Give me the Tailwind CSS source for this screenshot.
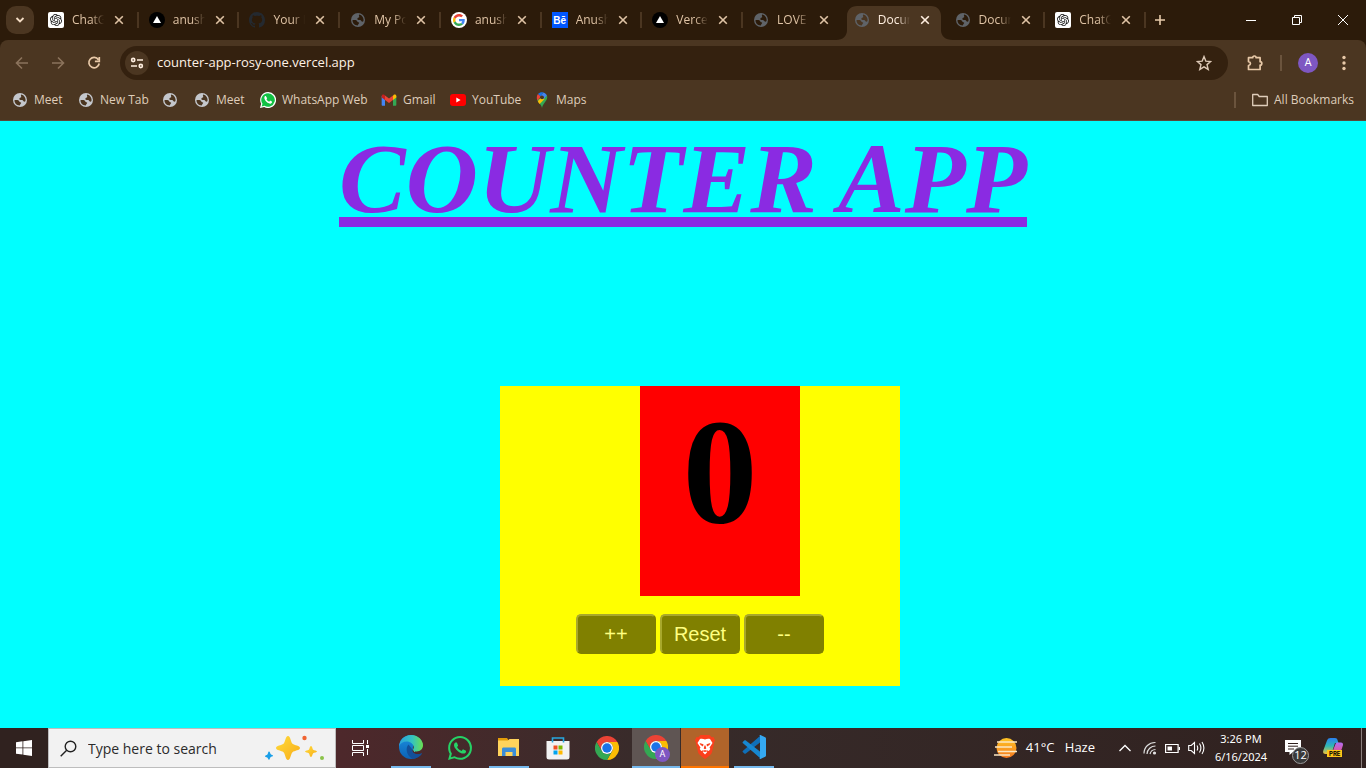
<!DOCTYPE html>
<html lang="en">
<head>
<meta charset="utf-8">
<meta name="viewport" content="width=device-width, initial-scale=1">
<title>Counter App</title>
<script src="https://cdn.jsdelivr.net/npm/@tailwindcss/browser@4"></script>
</head>
<body class="flex h-screen flex-col overflow-hidden bg-[#00ffff] font-['Segoe_UI','Open_Sans','Noto_Sans',sans-serif]">

<svg class="hidden" aria-hidden="true">
  <symbol id="x" viewBox="0 0 10 10"><path d="M1.2 1.2l7.6 7.6M8.8 1.2L1.2 8.8" stroke="currentColor" stroke-width="1.6" fill="none"/></symbol>
  <symbol id="globe" viewBox="0 0 16 16"><path fill="currentColor" fill-rule="evenodd" d="M8 1a7 7 0 1 0 0 14A7 7 0 0 0 8 1zM2.4 8.2c1.400-.3 3.200-.3 4.200.3.900.6.500 1.500 1.700 1.700 1.100.2 1.100.8.400 1.500-.700.6-.500 1.300-1.200 1.800A5.600 5.600 0 0 1 2.400 8.200zM9.300 2.600a5.600 5.600 0 0 1 4.200 6.500c-.8 1-1.700.6-2.200-.2-.5-.900-1.700-.700-2.700-.800-1.300-.1-1.600-1.300-.9-2.100.5-.6 1.300-.4 1.500-1.100.2-.8-.8-1.200 0-2.300z"/></symbol>
  <symbol id="gpt" viewBox="0 0 32 32"><rect width="32" height="32" rx="4" fill="#fff"/><g transform="translate(4 4)"><path fill="#111" d="M22.2819 9.8211a5.9847 5.9847 0 0 0-.5157-4.9108 6.0462 6.0462 0 0 0-6.5098-2.9A6.0651 6.0651 0 0 0 4.9807 4.1818a5.9847 5.9847 0 0 0-3.9977 2.9 6.0462 6.0462 0 0 0 .7427 7.0966 5.98 5.98 0 0 0 .511 4.9107 6.051 6.051 0 0 0 6.5146 2.9001A5.9847 5.9847 0 0 0 13.2599 24a6.0557 6.0557 0 0 0 5.7718-4.2058 5.9894 5.9894 0 0 0 3.9977-2.9001 6.0557 6.0557 0 0 0-.7475-7.0729zm-9.022 12.6081a4.4755 4.4755 0 0 1-2.8764-1.0408l.1419-.0804 4.7783-2.7582a.7948.7948 0 0 0 .3927-.6813v-6.7369l2.02 1.1686a.071.071 0 0 1 .038.052v5.5826a4.504 4.504 0 0 1-4.4945 4.4944zm-9.6607-4.1254a4.4708 4.4708 0 0 1-.5346-3.0137l.142.0852 4.783 2.7582a.7712.7712 0 0 0 .7806 0l5.8428-3.3685v2.3324a.0804.0804 0 0 1-.0332.0615L9.74 19.9502a4.4992 4.4992 0 0 1-6.1408-1.6464zM2.3408 7.8956a4.485 4.485 0 0 1 2.3655-1.9728V11.6a.7664.7664 0 0 0 .3879.6765l5.8144 3.3543-2.0201 1.1685a.0757.0757 0 0 1-.071 0l-4.8303-2.7865A4.504 4.504 0 0 1 2.3408 7.872zm16.5963 3.8558L13.1038 8.364 15.1192 7.2a.0757.0757 0 0 1 .071 0l4.8303 2.7913a4.4944 4.4944 0 0 1-.6765 8.1042v-5.6772a.79.79 0 0 0-.407-.667zm2.0107-3.0231l-.142-.0852-4.7735-2.7818a.7759.7759 0 0 0-.7854 0L9.409 9.2297V6.8974a.0662.0662 0 0 1 .0284-.0615l4.8303-2.7866a4.4992 4.4992 0 0 1 6.6802 4.66zM8.3065 12.863l-2.02-1.1638a.0804.0804 0 0 1-.038-.0567V6.0742a4.4992 4.4992 0 0 1 7.3757-3.4537l-.142.0805L8.704 5.459a.7948.7948 0 0 0-.3927.6813zm1.0976-2.3654l2.602-1.4998 2.6069 1.4998v2.9994l-2.5974 1.4997-2.6067-1.4997Z"/></g></symbol>
  <symbol id="vercel" viewBox="0 0 16 16"><circle cx="8" cy="8" r="8" fill="#000"/><path d="M8 4l4 7H4z" fill="#fff"/></symbol>
  <symbol id="github" viewBox="0 0 16 16"><path fill="#24292f" d="M8 0C3.58 0 0 3.58 0 8c0 3.54 2.29 6.53 5.47 7.59.4.07.55-.17.55-.38 0-.19-.01-.82-.01-1.49-2.01.37-2.53-.49-2.69-.94-.09-.23-.48-.94-.82-1.13-.28-.15-.68-.52-.01-.53.63-.01 1.08.58 1.23.82.72 1.21 1.87.87 2.33.66.07-.52.28-.87.51-1.07-1.78-.2-3.64-.89-3.64-3.95 0-.87.31-1.59.82-2.15-.08-.2-.36-1.02.08-2.12 0 0 .67-.21 2.2.82.64-.18 1.32-.27 2-.27s1.36.09 2 .27c1.53-1.04 2.2-.82 2.2-.82.44 1.1.16 1.92.08 2.12.51.56.82 1.27.82 2.15 0 3.07-1.87 3.75-3.65 3.95.29.25.54.73.54 1.48 0 1.07-.01 1.93-.01 2.2 0 .21.15.46.55.38A8.01 8.01 0 0 0 16 8c0-4.42-3.58-8-8-8z"/></symbol>
  <symbol id="google" viewBox="0 0 64 64"><circle cx="32" cy="32" r="32" fill="#fff"/><g transform="translate(8 8)"><path fill="#EA4335" d="M24 9.5c3.540 0 6.710 1.220 9.210 3.600l6.850-6.850C35.900 2.380 30.470 0 24 0 14.620 0 6.510 5.380 2.560 13.220l7.980 6.190C12.430 13.720 17.740 9.500 24 9.500z"/><path fill="#4285F4" d="M46.980 24.550c0-1.570-.150-3.090-.380-4.550H24v9.020h12.940c-.580 2.960-2.260 5.480-4.780 7.180l7.730 6c4.510-4.180 7.090-10.360 7.090-17.650z"/><path fill="#FBBC05" d="M10.530 28.590c-.480-1.450-.760-2.990-.760-4.590s.270-3.140.760-4.590l-7.980-6.190C.920 16.460 0 20.120 0 24c0 3.880.920 7.540 2.560 10.780l7.970-6.190z"/><path fill="#34A853" d="M24 48c6.480 0 11.930-2.130 15.890-5.810l-7.730-6c-2.150 1.450-4.920 2.300-8.160 2.300-6.260 0-11.570-4.220-13.470-9.910l-7.980 6.190C6.510 42.620 14.620 48 24 48z"/></g></symbol>
  <symbol id="wa" viewBox="0 0 24 24"><path fill="currentColor" d="M17.472 14.382c-.297-.149-1.758-.867-2.030-.967-.273-.099-.471-.148-.670.150-.197.297-.767.966-.940 1.164-.173.199-.347.223-.644.075-.297-.150-1.255-.463-2.390-1.475-.883-.788-1.480-1.761-1.653-2.059-.173-.297-.018-.458.130-.606.134-.133.298-.347.446-.520.149-.174.198-.298.298-.497.099-.198.050-.371-.025-.520-.075-.149-.669-1.612-.916-2.207-.242-.579-.487-.500-.669-.510-.173-.008-.371-.010-.570-.010-.198 0-.520.074-.792.372-.272.297-1.040 1.016-1.040 2.479 0 1.462 1.065 2.875 1.213 3.074.149.198 2.096 3.200 5.077 4.487.709.306 1.262.489 1.694.625.712.227 1.360.195 1.871.118.571-.085 1.758-.719 2.006-1.413.248-.694.248-1.289.173-1.413-.074-.124-.272-.198-.570-.347m-5.421 7.403h-.004a9.870 9.870 0 01-5.031-1.378l-.361-.214-3.741.982.998-3.648-.235-.374a9.860 9.860 0 01-1.510-5.260c.001-5.450 4.436-9.884 9.888-9.884 2.640 0 5.122 1.030 6.988 2.898a9.825 9.825 0 012.893 6.994c-.003 5.450-4.437 9.884-9.885 9.884m8.413-18.297A11.815 11.815 0 0012.050 0C5.495 0 .160 5.335.157 11.892c0 2.096.547 4.142 1.588 5.945L.057 24l6.305-1.654a11.882 11.882 0 005.683 1.448h.005c6.554 0 11.890-5.335 11.893-11.893a11.821 11.821 0 00-3.480-8.413Z"/></symbol>
  <symbol id="chrome" viewBox="0 0 48 48"><path fill="#EA4335" d="M3.200 12A24 24 0 0 1 44.800 12H24a12 12 0 0 0-10.400 18z"/><path fill="#FBBC04" d="M44.800 12A24 24 0 0 1 24 48l10.400-18A12 12 0 0 0 24 12z"/><path fill="#34A853" d="M24 48A24 24 0 0 1 3.200 12l10.400 18A12 12 0 0 0 34.400 30z"/><circle cx="24" cy="24" r="12" fill="#fff"/><circle cx="24" cy="24" r="9.500" fill="#1A73E8"/></symbol>
</svg>

<header class="shrink-0 border-b border-[#5b4a3a] bg-[#4b3621]">
  <!-- Tab strip -->
  <div class="flex h-10 items-center bg-[#2c1b0a] pl-1.5">
    <button aria-label="Search tabs" class="flex h-7 w-7 items-center justify-center rounded-[10px] bg-[#4b3621] text-[#f3dcc4]"><svg class="h-2.5 w-2.5" viewBox="0 0 10 10"><path d="M1.500 3L5 6.500 8.500 3" fill="none" stroke="currentColor" stroke-width="1.800"/></svg></button>
    <nav aria-label="Tabs" class="ml-1 grid h-10 w-[82%] max-w-[1108px] grid-cols-11 text-[12px] text-[#dfc3a5] [&>div]:relative [&>div]:flex [&>div]:min-w-0 [&>div]:items-center [&>div]:pl-2.5 [&_a]:flex [&_a]:items-center [&_a]:gap-2 [&_a>svg]:h-4 [&_a>svg]:w-4 [&_a>svg]:shrink-0 [&_a>svg]:text-[#5f6368] [&_span]:w-8 [&_span]:overflow-hidden [&_span]:whitespace-nowrap [&_span]:[mask-image:linear-gradient(to_right,black_60%,transparent)] [&_button]:ml-2.5 [&_button>svg]:h-2.5 [&_button>svg]:w-2.5">
      <div class="border-r-2 border-[#4b3621] [border-image:linear-gradient(transparent_30%,#4b3621_30%,#4b3621_70%,transparent_70%)_1]"><a href="#"><svg><use href="#gpt"/></svg><span>ChatGPT</span></a><button aria-label="Close tab"><svg><use href="#x"/></svg></button></div>
      <div class="border-r-2 border-[#4b3621] [border-image:linear-gradient(transparent_30%,#4b3621_30%,#4b3621_70%,transparent_70%)_1]"><a href="#"><svg><use href="#vercel"/></svg><span>anushka</span></a><button aria-label="Close tab"><svg><use href="#x"/></svg></button></div>
      <div class="border-r-2 border-[#4b3621] [border-image:linear-gradient(transparent_30%,#4b3621_30%,#4b3621_70%,transparent_70%)_1]"><a href="#"><svg><use href="#github"/></svg><span>Your Re</span></a><button aria-label="Close tab"><svg><use href="#x"/></svg></button></div>
      <div class="border-r-2 border-[#4b3621] [border-image:linear-gradient(transparent_30%,#4b3621_30%,#4b3621_70%,transparent_70%)_1]"><a href="#"><svg><use href="#globe"/></svg><span>My Port</span></a><button aria-label="Close tab"><svg><use href="#x"/></svg></button></div>
      <div class="border-r-2 border-[#4b3621] [border-image:linear-gradient(transparent_30%,#4b3621_30%,#4b3621_70%,transparent_70%)_1]"><a href="#"><svg><use href="#google"/></svg><span>anushka</span></a><button aria-label="Close tab"><svg><use href="#x"/></svg></button></div>
      <div class="border-r-2 border-[#4b3621] [border-image:linear-gradient(transparent_30%,#4b3621_30%,#4b3621_70%,transparent_70%)_1]"><a href="#"><b class="flex h-4 w-4 shrink-0 items-center justify-center bg-[#0057ff] font-['Liberation_Sans'] text-[10px] text-white">Bē</b><span>Anushka</span></a><button aria-label="Close tab"><svg><use href="#x"/></svg></button></div>
      <div class="border-r-2 border-[#4b3621] [border-image:linear-gradient(transparent_30%,#4b3621_30%,#4b3621_70%,transparent_70%)_1]"><a href="#"><svg><use href="#vercel"/></svg><span>Vercel</span></a><button aria-label="Close tab"><svg><use href="#x"/></svg></button></div>
      <div><a href="#"><svg><use href="#globe"/></svg><span>LOVE C</span></a><button aria-label="Close tab"><svg><use href="#x"/></svg></button></div>
      <div class="text-[#ffefe0]">
        <svg class="absolute -left-2 bottom-0 h-[34px] w-[117px]" viewBox="0 0 117 34" aria-hidden="true"><path fill="#4b3621" d="M0 34c7 0 11-4 11-10V10C11 4 15 0 21 0h74c6 0 10 4 10 10v14c0 6 4 10 12 10z"/></svg>
        <a href="#" aria-current="page" class="relative"><svg><use href="#globe"/></svg><span>Docum</span></a><button aria-label="Close tab" class="relative"><svg><use href="#x"/></svg></button></div>
      <div class="border-r-2 border-[#4b3621] [border-image:linear-gradient(transparent_30%,#4b3621_30%,#4b3621_70%,transparent_70%)_1]"><a href="#"><svg><use href="#globe"/></svg><span>Docum</span></a><button aria-label="Close tab"><svg><use href="#x"/></svg></button></div>
      <div class="border-r-2 border-[#4b3621] [border-image:linear-gradient(transparent_30%,#4b3621_30%,#4b3621_70%,transparent_70%)_1]"><a href="#"><svg><use href="#gpt"/></svg><span>ChatGPT</span></a><button aria-label="Close tab"><svg><use href="#x"/></svg></button></div>
    </nav>
    <button aria-label="New tab" class="ml-2 text-[#e8cbaa]"><svg class="h-3 w-3" viewBox="0 0 12 12"><path d="M6 1v10M1 6h10" stroke="currentColor" stroke-width="1.600"/></svg></button>
    <div class="ml-auto flex text-white [&>button]:flex [&>button]:h-10 [&>button]:w-[46px] [&>button]:items-center [&>button]:justify-center [&_svg]:h-3 [&_svg]:w-3">
      <button aria-label="Minimize"><svg viewBox="0 0 12 12"><path d="M1 6.500h10" stroke="currentColor"/></svg></button>
      <button aria-label="Restore"><svg viewBox="0 0 12 12" fill="none" stroke="currentColor"><path d="M1.500 3.500h7v7h-7zM3.500 3.500v-2h7v7h-2"/></svg></button>
      <button aria-label="Close"><svg viewBox="0 0 12 12"><path d="M1 1l10 10M11 1L1 11" stroke="currentColor"/></svg></button>
    </div>
  </div>
  <!-- Address row, rounded at the top against the darker strip -->
  <div class="bg-[#2c1b0a]">
  <div class="flex h-[46px] items-center rounded-t-[8px] bg-[#4b3621] pr-3.5 pl-3.5 text-[#e8c9a8]">
    <button aria-label="Back" class="text-[#8b735c]"><svg class="h-4 w-4" viewBox="0 0 16 16"><path d="M14 8H2.500M8 2.500L2.500 8 8 13.500" fill="none" stroke="currentColor" stroke-width="1.600"/></svg></button>
    <button aria-label="Forward" class="ml-5 text-[#8b735c]"><svg class="h-4 w-4" viewBox="0 0 16 16"><path d="M2 8h11.500M8 2.500L13.500 8 8 13.500" fill="none" stroke="currentColor" stroke-width="1.600"/></svg></button>
    <button aria-label="Reload" class="ml-5"><svg class="h-4 w-4" viewBox="0 0 16 16"><path d="M12.400 4.700A5.200 5.200 0 1 0 13.200 8.500M13.300 2v4.400H8.900" fill="none" stroke="currentColor" stroke-width="1.700"/></svg></button>
    <form class="ml-[18px] flex h-[34px] flex-1 items-center rounded-full bg-[#34210f] pr-4 pl-[5px]">
      <button type="button" aria-label="View site information" class="flex h-6 w-6 items-center justify-center rounded-full bg-[#4b3621] text-[#ffefe0]"><svg class="h-3.5 w-3.5" viewBox="0 0 14 14" fill="none" stroke="currentColor" stroke-width="1.600"><circle cx="3.200" cy="4" r="1.600"/><path d="M7 4h6M1 10h6"/><circle cx="10.800" cy="10" r="1.600"/></svg></button>
      <input aria-label="Address" type="text" value="counter-app-rosy-one.vercel.app" class="ml-2 min-w-0 flex-1 bg-transparent text-[13px] text-[#fff2e6] outline-none">
      <button type="button" aria-label="Bookmark this tab" class="text-[#dcc8b6]"><svg class="h-4 w-4" viewBox="0 0 16 16"><path d="M8 1.600l1.800 4.500 4.900.4-3.700 3.100 1.200 4.800L8 11.800l-4.200 2.600L5 9.600 1.300 6.500l4.900-.4z" fill="none" stroke="currentColor" stroke-width="1.400"/></svg></button>
    </form>
    <button aria-label="Extensions" class="ml-[18px]"><svg class="h-[18px] w-[18px]" viewBox="0 0 18 18"><path d="M2.500 3.700h4.200a1.700 1.700 0 0 1 3.400 0h4v4a1.700 1.700 0 0 1 0 3.400v4.400H2.500v-4c2.600-.4 2.600-3.400 0-3.800z" fill="none" stroke="currentColor" stroke-width="1.700" stroke-linejoin="round"/></svg></button>
    <i class="ml-4 h-4 w-0.5 bg-[#6b543d]"></i>
    <button aria-label="Profile" class="ml-4 flex h-5 w-5 items-center justify-center rounded-full bg-[#7e57c2] font-['Roboto'] text-[11px] text-white">A</button>
    <button aria-label="Menu" class="ml-[18px]"><svg class="h-4 w-4" viewBox="0 0 16 16" fill="currentColor"><circle cx="8" cy="2.500" r="1.700"/><circle cx="8" cy="8" r="1.700"/><circle cx="8" cy="13.500" r="1.700"/></svg></button>
  </div>
  </div>
  <!-- Bookmarks -->
  <div class="flex h-[34px] items-center pb-1.5 pl-3 text-[12px] whitespace-nowrap text-[#dfcdba] [&>a]:flex [&>a]:items-center [&>a]:gap-1.5 [&>a>svg]:h-4 [&>a>svg]:w-4 [&>a>svg]:shrink-0">
    <a href="#" class="w-[66px]"><svg class="text-[#c4c7cc]"><use href="#globe"/></svg>Meet</a>
    <a href="#" class="w-[84px]"><svg class="text-[#c4c7cc]"><use href="#globe"/></svg>New Tab</a>
    <a href="#" class="w-8" aria-label="Untitled bookmark"><svg class="text-[#c4c7cc]"><use href="#globe"/></svg></a>
    <a href="#" class="w-[66px]"><svg class="text-[#c4c7cc]"><use href="#globe"/></svg>Meet</a>
    <a href="#" class="w-[121px]"><svg viewBox="0 0 24 24"><path fill="#fff" d="M12 0a12 12 0 1 1-5.700 22.500L0 24l1.700-6.200A12 12 0 0 1 12 0z"/><path fill="#12c143" d="M12 1.800a10.200 10.200 0 1 1-5.300 18.900l-4.200 1.100 1.200-4.100A10.200 10.200 0 0 1 12 1.800z"/><path fill="#fff" d="M8.900 6.500c-.3-.6-1.200-.6-1.700 0-2.600 3 2.700 11 8.200 11 1.500 0 3-1.500 2.600-2.900-.1-.4-2.600-1.600-3-1.300l-1.200 1.300c-2-.7-3.300-2-4.100-3.800l1-1.400z"/></svg>WhatsApp Web</a>
    <a href="#" class="w-[69px]"><svg viewBox="0 0 24 24"><path fill="#4285F4" d="M1 5.500V19c0 1 .7 1.500 1.500 1.500H6V11z"/><path fill="#34A853" d="M18 11v9.500h3.500c.9 0 1.500-.7 1.500-1.500V5.500z"/><path fill="#FBBC04" d="M18 5.500V12l5-3.700V6c0-2.200-2.300-3.100-3.900-1.900z"/><path fill="#EA4335" d="M6 12V5.100l6 4.500 6-4.500V12l-6 4.500z"/><path fill="#C5221F" d="M1 6v2.300L6 12V5.100L4.900 4.200C3.300 3 1 3.900 1 6z"/></svg>Gmail</a>
    <a href="#" class="w-[84px]"><svg viewBox="0 0 16 16"><rect y="2" width="16" height="12" rx="3" fill="#f00"/><path d="M6.300 5.500v5l4.300-2.500z" fill="#fff"/></svg>YouTube</a>
    <a href="#"><svg viewBox="0 0 16 16"><path fill="#34A853" d="M8 16c-.5-3.500-4.300-5.500-5-8.500L13 3.500c1.500 5-4 7-5 12.500z"/><path fill="#FBBC04" d="M3.800 9.200L9.400 2.800l1 4.400L5.600 12c-.7-.9-1.400-1.800-1.800-2.800z"/><path fill="#EA4335" d="M4 2l3 2.500L3.500 8.600C2.300 6.200 2.700 3.500 4 2z"/><path fill="#1A73E8" d="M4 2C5.500.2 7.700-.2 9.500.4L6.600 4.200z"/><path fill="#4285F4" d="M9.500.4c1.600.5 2.800 1.600 3.400 3L9.400 7.200 6.600 4.200z"/><circle cx="8" cy="5.300" r="1.900" fill="#4b3621"/></svg>Maps</a>
    <i class="ml-auto h-4 w-0.5 bg-[#6b543d]"></i>
    <a href="#" class="mr-3 ml-4"><svg viewBox="0 0 16 16"><path d="M.700 12.500v-10h5l1.500 2h8.100v9H.700z" fill="none" stroke="currentColor" stroke-width="1.300" stroke-linejoin="round"/></svg><span>All Bookmarks</span></a>
  </div>
</header>

<main class="flex min-h-0 flex-1 flex-col items-center overflow-hidden">
  <h1 class="text-center font-['Liberation_Serif',serif] text-[100px] leading-[115px] font-bold text-[#8a2be2] italic underline">COUNTER APP</h1>
  <section aria-label="Counter" class="mt-[150px] ml-[34px] flex h-[300px] w-[400px] shrink-0 flex-col items-center bg-[#ffff00]">
    <output class="ml-10 block h-[210px] w-40 bg-[#ff0000] text-center font-['Liberation_Serif',serif] text-[150px] leading-[172px] font-bold">0</output>
    <div class="mt-[18px] flex gap-1 font-['Liberation_Sans',sans-serif] text-[20px] text-[#ffff80] [&>button]:h-10 [&>button]:w-20 [&>button]:rounded-[5px] [&>button]:border-2 [&>button]:border-t-[#a8a82c] [&>button]:border-l-[#a8a82c] [&>button]:border-r-[#808000] [&>button]:border-b-[#808000] [&>button]:bg-[#808000]">
      <button>++</button><button>Reset</button><button>--</button>
    </div>
  </section>
</main>

<footer class="flex h-10 shrink-0 items-center bg-linear-to-r from-[#4d282b] from-25% via-[#372b2a] via-48% to-[#30211f] text-white">
  <button aria-label="Start" class="flex h-10 w-12 shrink-0 items-center justify-center bg-[#30221f]"><svg class="h-4 w-4" viewBox="0 0 16 16" fill="#fff"><path d="M0 2.200L6.500 1.300v6.200H0zM7.300 1.200L16 0v7.500H7.300zM0 8.300h6.500v6.200L0 13.700zM7.300 8.300H16V16l-8.700-1.200z"/></svg></button>
  <label class="flex h-10 w-72 shrink-0 items-center border border-[#bdbdbd] bg-[#f2f2f2] text-[#222]">
    <svg class="ml-[11px] h-[17px] w-[17px]" viewBox="0 0 17 17" fill="none" stroke="#222" stroke-width="1.400"><circle cx="10.500" cy="6.500" r="5.300"/><path d="M6.700 10.300L.7 16.300"/></svg>
    <input type="text" aria-label="Search" placeholder="Type here to search" class="ml-[11px] w-[172px] bg-transparent text-[14px] outline-none placeholder:text-[#2b2b2b]">
    <svg class="h-7 w-[64px]" viewBox="0 0 64 28"><defs><linearGradient id="gold" x2="1" y2="1"><stop stop-color="#ffdc3c"/><stop offset="1" stop-color="#f8ac18"/></linearGradient></defs><path fill="url(#gold)" d="M28 2c2.600 0 2.600 6 4.500 7.800S40 11.500 40 14s-5.600 2.400-7.500 4.200S30.600 26 28 26s-2.600-6-4.500-7.800S16 16.500 16 14s5.600-2.400 7.500-4.200S25.400 2 28 2z"/><path fill="url(#gold)" d="M51 12c1.300 0 1.300 3 2.200 3.800s3.800.7 3.800 1.700-2.900 1-3.800 1.800S52.300 23 51 23s-1.300-2.900-2.200-3.700S45 18.500 45 17.500s2.900-.9 3.800-1.700S49.700 12 51 12z"/><path fill="#1a9fe8" d="M9 17.500c1 0 1 2 1.800 2.800s2.200.6 2.200 1.500-1.800.8-2.500 1.500-.6 2.500-1.500 2.500-1-1.700-1.800-2.300S5 23 5 22.200s1.700-1 2.400-1.700.6-3 1.600-3z"/><circle cx="44.500" cy="4" r="2.200" fill="#f06432"/><circle cx="62" cy="24" r="2" fill="#8bc34a"/></svg>
  </label>
  <nav aria-label="Taskbar" class="flex shrink-0 [&>button]:relative [&>button]:mr-px [&>button]:flex [&>button]:h-10 [&>button]:w-12 [&>button]:items-center [&>button]:justify-center [&>button>svg]:h-6 [&>button>svg]:w-6">
    <button aria-label="Task view"><svg viewBox="0 0 24 24" fill="none" stroke="#fff" stroke-width="1"><path d="M4.500 4v3.500h11V4M4.500 20v-3.500h11V20M4.500 9.500h11v5h-11zM19.500 4v4M19.500 13v6"/><path fill="#fff" stroke="none" d="M18 9h3v3h-3z"/></svg></button>
    <button aria-label="Edge" class="ml-0.5 border-b-2 border-[#76b9ed] [clip-path:inset(0_4px)]"><svg viewBox="0 0 24 24"><defs><linearGradient id="e1" x2="1"><stop stop-color="#2a9fdd"/><stop offset=".55" stop-color="#34c3c0"/><stop offset="1" stop-color="#6be04f"/></linearGradient><linearGradient id="e2" x2="0" y2="1"><stop stop-color="#1b8fe0"/><stop offset="1" stop-color="#0c62b4"/></linearGradient></defs><circle cx="12" cy="12" r="12" fill="url(#e2)"/><path fill="#4b292b" d="M14.200 13.900c-.9-1.200.3-1.300 0-3.500L24.500 10v8.500H23c-1 .7-3 1.300-5 1-4.500-.4-6-4-3.800-5.600z"/><path fill="#12509a" d="M9.500 9.500C6 13 7.500 21 13.800 23.900c3.900-.4 7.200-2.400 9.200-5.200.2-.4-.1-.7-.6-.4-4.500 2.200-9.900.2-9.400-4.300z"/><path fill="url(#e1)" d="M0 11.500C.4 5 5.300 0 12 0c8 0 12 6 12 10.300 0 3.900-3 6.200-6.300 6.200-2.600 0-4.300-1.100-3.500-2.300 1.300-1.700.6-4.200-1.600-5.900C9 5.300 2 6.300 0 11.500z"/></svg></button>
    <button aria-label="WhatsApp" class="text-[#25d366]"><svg><use href="#wa"/></svg></button>
    <button aria-label="File Explorer" class="border-b-2 border-[#76b9ed] [clip-path:inset(0_4px)]"><svg viewBox="0 0 24 24"><path fill="#e39c09" d="M1 3h9l1.500 2H22v6H1z"/><path fill="#ffd35c" d="M1 5.500h10L12.500 4H22v17H1z"/><path fill="#3b8dd8" d="M5 14c0-1 .7-1.500 1.500-1.500h11c1 0 1.500.7 1.500 1.500v7h-3.500v-4h-7v4H5z"/></svg></button>
    <button aria-label="Microsoft Store"><svg viewBox="0 0 24 24"><path fill="#f2f2f2" d="M.5 5h23v16a2.500 2.500 0 0 1-2.500 2.500H3A2.500 2.500 0 0 1 .500 21z"/><path fill="none" stroke="#27a8e0" stroke-width="1.600" d="M6.500 6.500V2h11v4.500"/><path fill="#f25022" d="M7.500 9.500h4v4h-4z"/><path fill="#7fba00" d="M12.500 9.500h4v4h-4z"/><path fill="#00a4ef" d="M7.500 14.500h4v4h-4z"/><path fill="#ffb900" d="M12.500 14.500h4v4h-4z"/></svg></button>
    <button aria-label="Chrome"><svg><use href="#chrome"/></svg></button>
    <button aria-label="Chrome, profile A" class="border-b-2 border-[#76b9ed] bg-[#5f5553]"><svg><use href="#chrome"/></svg><span class="absolute right-2.5 bottom-1 flex h-[15px] w-[15px] items-center justify-center rounded-full bg-[#7e57c2] font-['Roboto'] text-[9px]">A</span></button>
    <button aria-label="Brave" class="border-b-2 border-[#ff7500] bg-[#b0642a]"><svg viewBox="0 0 24 24"><path fill="#fb3f1c" d="M7.500 0h9l2.200 2.300 1.800-.2L22 5l-.8 2.400L19 17c-.5 2-1.500 3-7 7-5.500-4-6.500-5-7-7L2.800 7.400 2 5l1.500-2.900 1.800.2z"/><path fill="#fff" d="M12 4.500c1.500-.7 3.500-.8 5-.5l2.500 4-3 4.500.8 1.500-1.500 2-2.500-1 1 2-2.300 2.500-2.300-2.500 1-2-2.500 1-1.500-2 .8-1.500-3-4.500L7 4c1.500-.3 3.500-.2 5 .5z"/><path fill="#fb3f1c" d="M6.500 8l4 1.200-.5 2.300-2.500-1.500zM17.500 8l-4 1.200.5 2.300 2.500-1.500zM11.500 10.500h1l.8 3-1.300.7-1.300-.7zM9.500 16.300l2.500-1.300 2.500 1.300-2.500.8z"/></svg></button>
    <button aria-label="Visual Studio Code" class="border-b-2 border-[#76b9ed] [clip-path:inset(0_4px)]"><svg viewBox="0 0 24 24"><path fill="#0f6fb8" d="M18 1L1 15.700c-.6.5-.6 1 0 1.500l1.300 1.200c.5.400 1 .4 1.500 0L18 7.500z"/><path fill="#1787d0" d="M18 23L1 8.300c-.6-.5-.6-1 0-1.500l1.300-1.200c.5-.4 1-.4 1.500 0L18 16.500z"/><path fill="#35a9f2" d="M18.500.1l4.700 2.200c.5.300.8.700.8 1.300v16.800c0 .6-.3 1-.8 1.300l-4.700 2.200c-.7.300-1.300 0-1.700-.4.700.5 1.200 0 1.200-.8V1.300c0-.8-.5-1.300-1.200-.8.400-.4 1-.7 1.700-.4z"/></svg></button>
  </nav>
  <div class="ml-auto flex h-10 shrink-0 items-center text-[13px]">
    <button class="flex items-center"><svg class="mr-2 h-6 w-6" viewBox="0 0 24 24"><defs><linearGradient id="sun" x2="0" y2="1"><stop stop-color="#ffc524"/><stop offset="1" stop-color="#f47820"/></linearGradient></defs><circle cx="12.500" cy="12" r="10" fill="url(#sun)"/><path d="M3 6h20M1 11h17M4 15.500h19M0 19h16" stroke="#fbe6c2" stroke-width="1.600"/></svg><span class="w-[39px] text-left">41°C</span><span>Haze</span></button>
    <button aria-label="Show hidden icons" class="ml-6"><svg class="h-3 w-3" viewBox="0 0 12 12"><path d="M.500 9L6 3.500 11.500 9" fill="none" stroke="#fff" stroke-width="1.300"/></svg></button>
    <svg class="ml-3 h-3.5 w-3.5" viewBox="0 0 14 14" fill="none" stroke="#ddd" stroke-width="1.200"><path d="M1 12.500A11 11 0 0 1 12.500 1.500M4 13A8.500 8.500 0 0 1 12.500 5M7 13a6 6 0 0 1 5.500-4.500"/><circle cx="11.500" cy="12" r="1" fill="#fff"/></svg>
    <svg class="ml-2 h-[15px] w-[15px]" viewBox="0 0 15 15"><path d="M.600 3.500h12.500v8H.600zM14.500 6v3" fill="none" stroke="#fff" stroke-width="1.200"/><path d="M2.500 5.500h4.500v4H2.500z" fill="#fff"/></svg>
    <svg class="ml-2 h-4 w-[17px]" viewBox="0 0 17 16" fill="none" stroke="#fff" stroke-width="1.100"><path d="M.700 5.500h2.500L6.500 2.500v11L3.200 10.500H.700zM9 5.500q1.500 2.500 0 5M11.500 3.500q2.800 4.500 0 9M14 2q3.800 6 0 12"/></svg>
    <time class="ml-2 block w-[56px] text-center font-['Noto_Sans'] text-[11px] leading-[18px]"><span class="block -mx-4">3:26 PM</span><span class="block -mx-4">6/16/2024</span></time>
    <button aria-label="12 notifications" class="relative ml-4 h-7 w-7"><svg class="h-4 w-4" viewBox="0 0 16 16"><path fill="#fff" d="M0 0h16v12H8l-3.500 3V12H0z"/><path d="M3 3.500h10M3 6.200h10M3 9h6" stroke="#30211f"/></svg><span class="absolute right-1 -bottom-0.5 flex h-[17px] w-[17px] items-center justify-center rounded-full border border-[#9a9a9a] bg-[#3a3a3a] text-[11px]">12</span></button>
    <button aria-label="Copilot" class="relative ml-2.5 h-5 w-5"><svg class="h-5 w-5" viewBox="0 0 20 20"><defs><linearGradient id="c1" x2="0" y2="1"><stop stop-color="#2a7ff0"/><stop offset=".5" stop-color="#2fb8b4"/><stop offset="1" stop-color="#f3c53b"/></linearGradient><linearGradient id="c2" x2="0" y2="1"><stop stop-color="#b06cf5"/><stop offset="1" stop-color="#f0507b"/></linearGradient></defs><path fill="url(#c1)" d="M4 2.500C4.600.8 6 0 7.500 0H12c1.500 0 2.200.8 2.600 2.200L15.500 5H12L9 14c-.5 1.500-1.200 2-2.500 2H2.500C.5 16-.3 14.500.3 12.500z"/><path fill="url(#c2)" d="M12.500 6c.4-1 1-1.500 2-1.500H18c1.700 0 2.400 1.500 1.800 3.300L17 16H8.500z"/></svg><span class="absolute top-3 left-1 h-[7px] bg-[#ffc619] px-0.5 font-['Inter'] text-[6px] leading-[7px] font-bold text-black">PRE</span></button>
    <i class="mr-1 ml-[18px] h-10 w-px bg-[#8a7f7d]"></i>
  </div>
</footer>
</body>
</html>
